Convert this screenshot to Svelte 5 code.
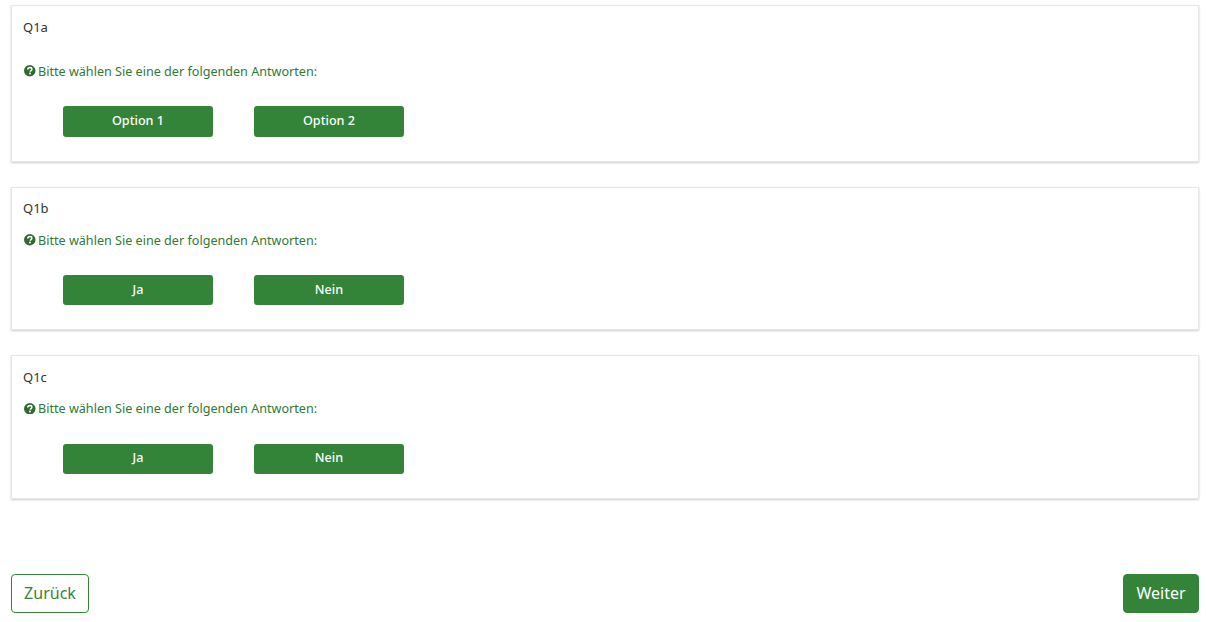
<script>
	const questions = [
		{ code: "Q1a", options: ["Option 1", "Option 2"], tall: true },
		{ code: "Q1b", options: ["Ja", "Nein"] },
		{ code: "Q1c", options: ["Ja", "Nein"] }
	];
</script>

<main class="page">
	{#each questions as q}
		<section class="card" class:tall={q.tall}>
			<div class="code">{q.code}</div>
			<div class="hint">
				<svg class="hint-icon" viewBox="0 0 12 12" aria-hidden="true">
					<circle cx="6" cy="6" r="6" fill="#2f6b2f" />
					<path d="M3.9 4.6c0-1.2 1-1.9 2.2-1.9s2.1.7 2.1 1.7c0 1.4-1.6 1.4-1.6 2.6" fill="none" stroke="#fff" stroke-width="1.6" />
					<rect x="5.3" y="8" width="1.8" height="1.7" fill="#fff" />
				</svg>
				Bitte wählen Sie eine der folgenden Antworten:
			</div>
			<div class="options">
				{#each q.options as option}
					<button type="button" class="option">{option}</button>
				{/each}
			</div>
		</section>
	{/each}

	<div class="nav">
		<button type="button" class="nav-btn back">Zurück</button>
		<button type="button" class="nav-btn next">Weiter</button>
	</div>
</main>

<style>
	:global(body) {
		background: #fff;
		font-family: "Noto Sans", "Open Sans", sans-serif;
		font-size: 12.6px;
		color: #333;
	}

	.page {
		padding: 5px 7px 0 11px;
	}

	.card {
		box-sizing: border-box;
		height: 143.4px;
		margin-bottom: 25px;
		padding: 11.2px 11px 0;
		background: #fff;
		border: 1px solid #e7e7e7;
		box-shadow: 0 1px 2px rgba(0, 0, 0, 0.2);
	}

	.card.tall {
		height: 157px;
		padding-top: 12px;
	}

	.code {
		height: 18px;
		line-height: 18px;
		font-size: 13px;
	}

	.hint {
		display: flex;
		align-items: center;
		gap: 2.5px;
		height: 18px;
		margin-top: 13.85px;
		color: #2f7a33;
	}

	.tall .hint {
		margin-top: 26px;
	}

	.hint-icon {
		width: 11.5px;
		height: 11.5px;
		margin-left: 1px;
	}

	.options {
		display: flex;
		gap: 41px;
		margin: 26.15px 0 0 40px;
	}

	.option {
		width: 150px;
		height: 30px;
		padding: 0 0 2px;
		background: #338438;
		border: 0;
		border-radius: 3px;
		color: #fff;
		font: 500 12.6px "Noto Sans", "Open Sans", sans-serif;
	}

	.tall .option {
		height: 31px;
	}

	.nav {
		display: flex;
		justify-content: space-between;
		margin-top: 75px;
	}

	.nav-btn {
		box-sizing: border-box;
		height: 39px;
		padding-bottom: 2px;
		border-radius: 4px;
		font: 16px "Noto Sans", "Open Sans", sans-serif;
	}

	.back {
		width: 78px;
		background: #fff;
		border: 1px solid #338438;
		color: #338438;
	}

	.next {
		width: 76px;
		background: #338438;
		border: 1px solid #338438;
		color: #fff;
	}
</style>
